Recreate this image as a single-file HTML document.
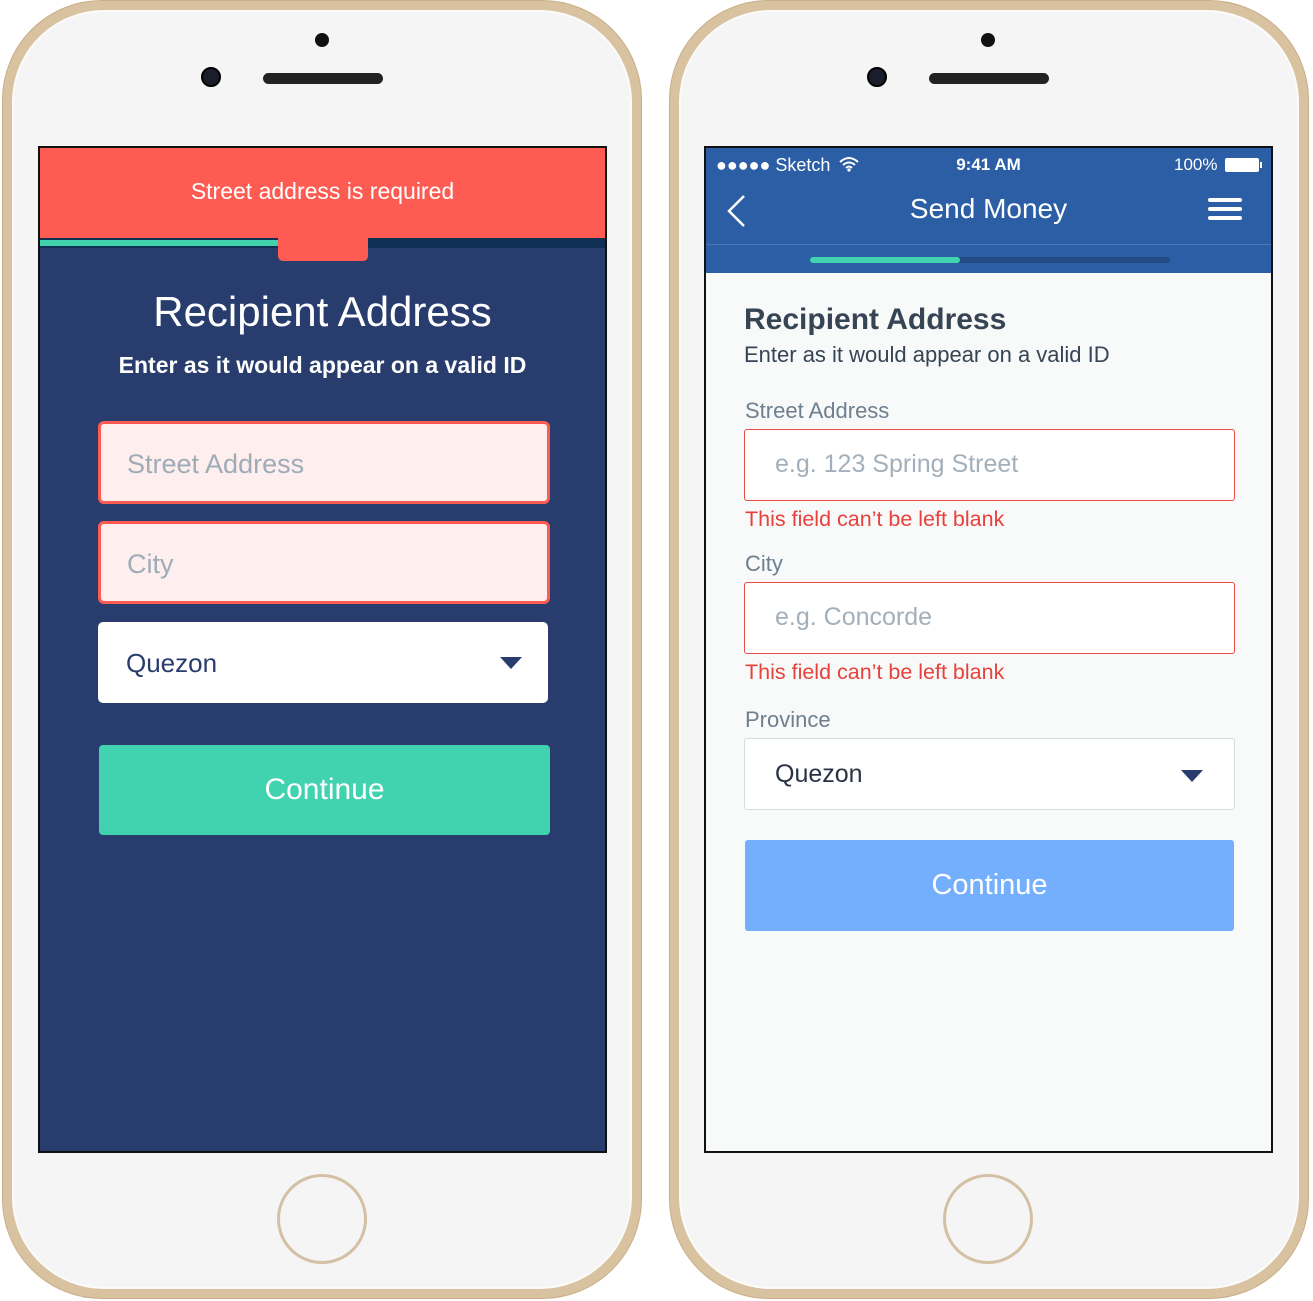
<!DOCTYPE html>
<html><head><style>
*{box-sizing:border-box;margin:0;padding:0}
body{width:1313px;height:1301px;background:#fff;position:relative;overflow:hidden;font-family:"Liberation Sans",sans-serif}
.ph{position:absolute;top:0;width:640px;height:1299px;border-radius:100px;background:#d9c2a0;border:1px solid #c8ae88}
.ph .in{position:absolute;left:9px;top:9px;right:9px;bottom:9px;border-radius:92px;background:#f4f5f4;border:2px solid #fbfbfa}
.dot{position:absolute;width:14px;height:14px;border-radius:50%;background:#111}
.cam{position:absolute;width:20px;height:20px;border-radius:50%;background:#1a1d2a;border:2px solid #000}
.spk{position:absolute;width:120px;height:11px;border-radius:6px;background:#222}
.home{position:absolute;width:90px;height:90px;border-radius:50%;border:3px solid #d4c0a4}
.scr{position:absolute;top:146px;width:569px;height:1007px;border:2px solid #111;overflow:hidden}
.abs{position:absolute}
.c{text-align:center}
</style></head><body>
<div class="ph" style="left:2px"><div class="in"></div></div>
<div class="ph" style="left:669px"><div class="in"></div></div>
<div class="dot" style="left:315px;top:33px"></div>
<div class="dot" style="left:981px;top:33px"></div>
<div class="cam" style="left:201px;top:67px"></div>
<div class="cam" style="left:867px;top:67px"></div>
<div class="spk" style="left:263px;top:73px"></div>
<div class="spk" style="left:929px;top:73px"></div>
<div class="home" style="left:277px;top:1174px"></div>
<div class="home" style="left:943px;top:1174px"></div>

<div class="scr" style="left:38px;background:#283d6d">
  <div class="abs" style="left:0;top:0;width:565px;height:90px;background:#fe5c52"></div>
  <div class="abs c" style="left:0;top:30px;width:565px;color:#fff;font-size:23px">Street address is required</div>
  <div class="abs" style="left:0;top:90px;width:565px;height:10px;background:#0f2f55"></div>
  <div class="abs" style="left:0;top:92px;width:240px;height:6px;background:#41d1ad"></div>
  <div class="abs" style="left:238px;top:90px;width:90px;height:23px;background:#fe5c52;border-radius:0 0 5px 5px"></div>
  <div class="abs c" style="left:0;top:140px;width:565px;color:#fff;font-size:42px">Recipient Address</div>
  <div class="abs c" style="left:0;top:204px;width:565px;color:#fff;font-size:23px;font-weight:bold">Enter as it would appear on a valid ID</div>
  <div class="abs" style="left:58px;top:273px;width:452px;height:83px;background:#feeeee;border:3px solid #fe5c52;border-radius:6px;padding:25px 26px;color:#9eacb8;font-size:27px">Street Address</div>
  <div class="abs" style="left:58px;top:373px;width:452px;height:83px;background:#feeeee;border:3px solid #fe5c52;border-radius:6px;padding:25px 26px;color:#9eacb8;font-size:27px">City</div>
  <div class="abs" style="left:58px;top:474px;width:450px;height:81px;background:#fff;border-radius:5px;padding:26px 28px;color:#283d6d;font-size:26px">Quezon</div>
  <div class="abs" style="left:460px;top:509px;width:0;height:0;border-left:11px solid transparent;border-right:11px solid transparent;border-top:12px solid #283d6d"></div>
  <div class="abs c" style="left:59px;top:597px;width:451px;height:90px;background:#41d3b0;border-radius:4px;color:#fff;font-size:30px;line-height:90px">Continue</div>
</div>

<div class="scr" style="left:704px;background:#f8f9f9">
  <div class="abs" style="left:0;top:0;width:565px;height:125px;background:#2c5ea5"></div>
  <div class="abs" style="left:0;top:96px;width:565px;height:1px;background:#4a77b8"></div>
  <div class="abs" style="left:10px;top:7px;color:#fff;font-size:18px">●●●●● Sketch</div>
  <div class="abs c" style="left:0;top:7px;width:565px;color:#fff;font-size:17px;font-weight:bold">9:41 AM</div>
  <div class="abs" style="left:468px;top:7px;color:#fff;font-size:17px">100%</div>
  <div class="abs" style="left:519px;top:10px;width:34px;height:14px;background:#fff;border-radius:2px"></div>
  <div class="abs" style="left:554px;top:14px;width:2px;height:6px;background:#fff"></div>
  <svg class="abs" style="left:132px;top:8px" width="22" height="16"><path d="M2 6Q11-2 20 6M5 9Q11 4 17 9M8 12Q11 9 14 12" stroke="#fff" stroke-width="2" fill="none"/><circle cx="11" cy="14" r="1.6" fill="#fff"/></svg>
  <svg class="abs" style="left:20px;top:46px" width="22" height="36"><path d="M18 2L3 17L18 32" stroke="#fff" stroke-width="2.5" fill="none"/></svg>
  <div class="abs c" style="left:0;top:45px;width:565px;color:#fff;font-size:28px">Send Money</div>
  <div class="abs" style="left:502px;top:50px;width:34px;height:4px;background:#fff;border-radius:2px"></div>
  <div class="abs" style="left:502px;top:59px;width:34px;height:4px;background:#fff;border-radius:2px"></div>
  <div class="abs" style="left:502px;top:68px;width:34px;height:4px;background:#fff;border-radius:2px"></div>
  <div class="abs" style="left:104px;top:109px;width:360px;height:6px;background:#224a84;border-radius:3px"></div>
  <div class="abs" style="left:104px;top:109px;width:150px;height:6px;background:#41d3ad;border-radius:3px"></div>
  <div class="abs" style="left:38px;top:155px;color:#364454;font-size:30px;font-weight:bold">Recipient Address</div>
  <div class="abs" style="left:38px;top:194px;color:#364454;font-size:22px">Enter as it would appear on a valid ID</div>
  <div class="abs" style="left:39px;top:250px;color:#6e7f8f;font-size:22px">Street Address</div>
  <div class="abs" style="left:38px;top:281px;width:491px;height:72px;background:#fff;border:1.5px solid #e84c45;border-radius:3px;padding:20px 30px;color:#a3b0bb;font-size:25px">e.g. 123 Spring Street</div>
  <div class="abs" style="left:39px;top:359px;color:#e8413b;font-size:21.5px">This field can’t be left blank</div>
  <div class="abs" style="left:39px;top:403px;color:#6e7f8f;font-size:22px">City</div>
  <div class="abs" style="left:38px;top:434px;width:491px;height:72px;background:#fff;border:1.5px solid #e84c45;border-radius:3px;padding:20px 30px;color:#a3b0bb;font-size:25px">e.g. Concorde</div>
  <div class="abs" style="left:39px;top:512px;color:#e8413b;font-size:21.5px">This field can’t be left blank</div>
  <div class="abs" style="left:39px;top:559px;color:#6e7f8f;font-size:22px">Province</div>
  <div class="abs" style="left:38px;top:590px;width:491px;height:72px;background:#fff;border:1.5px solid #d4dde4;border-radius:3px;padding:21px 30px;color:#283244;font-size:25px">Quezon</div>
  <div class="abs" style="left:475px;top:622px;width:0;height:0;border-left:11px solid transparent;border-right:11px solid transparent;border-top:12px solid #283d6d"></div>
  <div class="abs c" style="left:39px;top:692px;width:489px;height:91px;background:#74affd;border-radius:3px;color:#fff;font-size:29px;line-height:91px">Continue</div>
</div>
</body></html>
